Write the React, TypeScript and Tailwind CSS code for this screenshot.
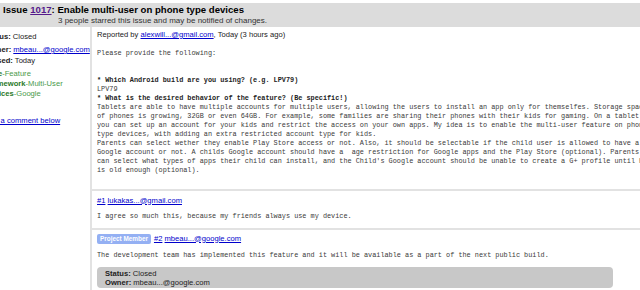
import React from 'react';

const sans = "font-['Liberation_Sans',Arial,sans-serif]";
const mono = "font-['Liberation_Mono','Courier_New',monospace]";

const descLines: { text: string; bold?: boolean }[] = [
  { text: 'Please provide the following:' },
  { text: '' },
  { text: '' },
  { text: '* Which Android build are you using? (e.g. LPV79)', bold: true },
  { text: 'LPV79' },
  { text: '* What is the desired behavior of the feature? (Be specific!)', bold: true },
  {
    text: 'Tablets are able to have multiple accounts for multiple users, allowing the users to install an app only for themselfes. Storage space',
  },
  {
    text: 'of phones is growing, 32GB or even 64GB. For example, some families are sharing their phones with their kids for gaming. On a tablet',
  },
  {
    text: 'you can set up an account for your kids and restrict the access on your own apps. My idea is to enable the multi-user feature on phone',
  },
  { text: 'type devices, with adding an extra restricted account type for kids.' },
  {
    text: 'Parents can select wether they enable Play Store access or not. Also, it should be selectable if the child user is allowed to have a',
  },
  {
    text: 'Google account or not. A childs Google account should have a  age restriction for Google apps and the Play Store (optional). Parents',
  },
  {
    text: "can select what types of apps their child can install, and the Child's Google account should be unable to create a G+ profile until he",
  },
  { text: 'is old enough (optional).' },
];

const labels = [
  { prefix: 'Type', value: 'Feature' },
  { prefix: 'Framework', value: 'Multi-User' },
  { prefix: 'Devices', value: 'Google' },
];

const Link = ({ children }: { children: React.ReactNode }) => (
  <a href="#" className="text-[#0000cc] underline">
    {children}
  </a>
);

const Separator = () => <div className="h-[2px] w-full bg-[#e2e2e2]" />;

const App = () => {
  return (
    <div className={`h-[290px] w-[640px] overflow-hidden bg-white pt-[3px] text-[#222] ${sans}`}>
      <header className="h-[24px] bg-[#dcdcdc] pl-[3px] pt-[1px]">
        <h1 className="text-[9.6px] leading-[12px] font-bold text-black">
          Issue{' '}
          <a href="#" className="text-[#551a8b] underline">
            1017
          </a>
          : Enable multi-user on phone type devices
        </h1>
        <p className="pl-[55px] text-[8px] leading-[10px] text-[#333]">
          3 people starred this issue and may be notified of changes.
        </p>
      </header>

      <div className="flex h-[263px]">
        {/* sidebar is scrolled a little to the right, so its text is cut on the left */}
        <aside className="w-[90px] shrink-0 overflow-hidden text-[7.6px] leading-[10px] whitespace-nowrap">
          <div className="-ml-[15px] pt-[5px]">
            <p>
              <b>Status:</b> Closed
            </p>
            <p className="mt-[3px]">
              <b>Owner:</b> <Link>mbeau...@google.com</Link>
            </p>
            <p className="mt-[1px]">
              <b>Closed:</b> Today
            </p>
            <div className="mt-[3px] flex flex-col">
              {labels.map((l) => (
                <p key={l.prefix} className="text-[#4a9a4a]">
                  <b className="text-[#2a7a2a]">{l.prefix}</b>-{l.value}
                </p>
              ))}
            </div>
            <p className="mt-[17px]">
              <Link>Add a comment below</Link>
            </p>
          </div>
        </aside>

        <main className="min-w-0 flex-1 border-l-2 border-[#e2e2e2]">
          <section className="pt-[3px] pb-[14px] pl-[5px]">
            <p className="text-[7.6px] leading-[10px] whitespace-nowrap">
              Reported by <Link>alexwill...@gmail.com</Link>, Today (3 hours ago)
            </p>
            <pre className={`mt-[8.5px] overflow-hidden text-[6.85px] leading-[9px] text-[#3a3a3a] ${mono}`}>
              {descLines.map((line, i) => (
                <div key={i} className={line.bold ? 'h-[9px] font-bold text-[#222]' : 'h-[9px]'}>
                  {line.text}
                </div>
              ))}
            </pre>
          </section>
          <Separator />

          <section className="pt-[5px] pb-[6.5px] pl-[5px]">
            <p className="text-[7.6px] leading-[10px]">
              <Link>#1</Link> <Link>lukakas...@gmail.com</Link>
            </p>
            <pre className={`mt-[6.5px] text-[6.85px] leading-[9px] text-[#3a3a3a] ${mono}`}>
              I agree so much this, because my friends always use my device.
            </pre>
          </section>
          <Separator />

          <section className="pt-[4px] pl-[5px]">
            <div className="flex h-[10px] items-center gap-[3px] text-[7.6px] leading-[10px]">
              <span className="rounded-[2px] bg-[#94b0f3] px-[3px] text-[6.4px] leading-[10px] font-bold text-white">
                Project Member
              </span>
              <span>
                <Link>#2</Link> <Link>mbeau...@google.com</Link>
              </span>
            </div>
            <pre className={`mt-[7.5px] text-[6.85px] leading-[9px] text-[#3a3a3a] ${mono}`}>
              The development team has implemented this feature and it will be available as a part of the next public build.
            </pre>
            <div className="mt-[6.5px] h-[21px] w-[516px] rounded-[4px] bg-[#c8c8c8] pt-[2px] pl-[8px] text-[7.6px] leading-[9px]">
              <p>
                <b>Status:</b> Closed
              </p>
              <p>
                <b>Owner:</b> mbeau...@google.com
              </p>
            </div>
          </section>
          <div className="mt-[2px]">
            <Separator />
          </div>
        </main>
      </div>
    </div>
  );
};

export default App;
